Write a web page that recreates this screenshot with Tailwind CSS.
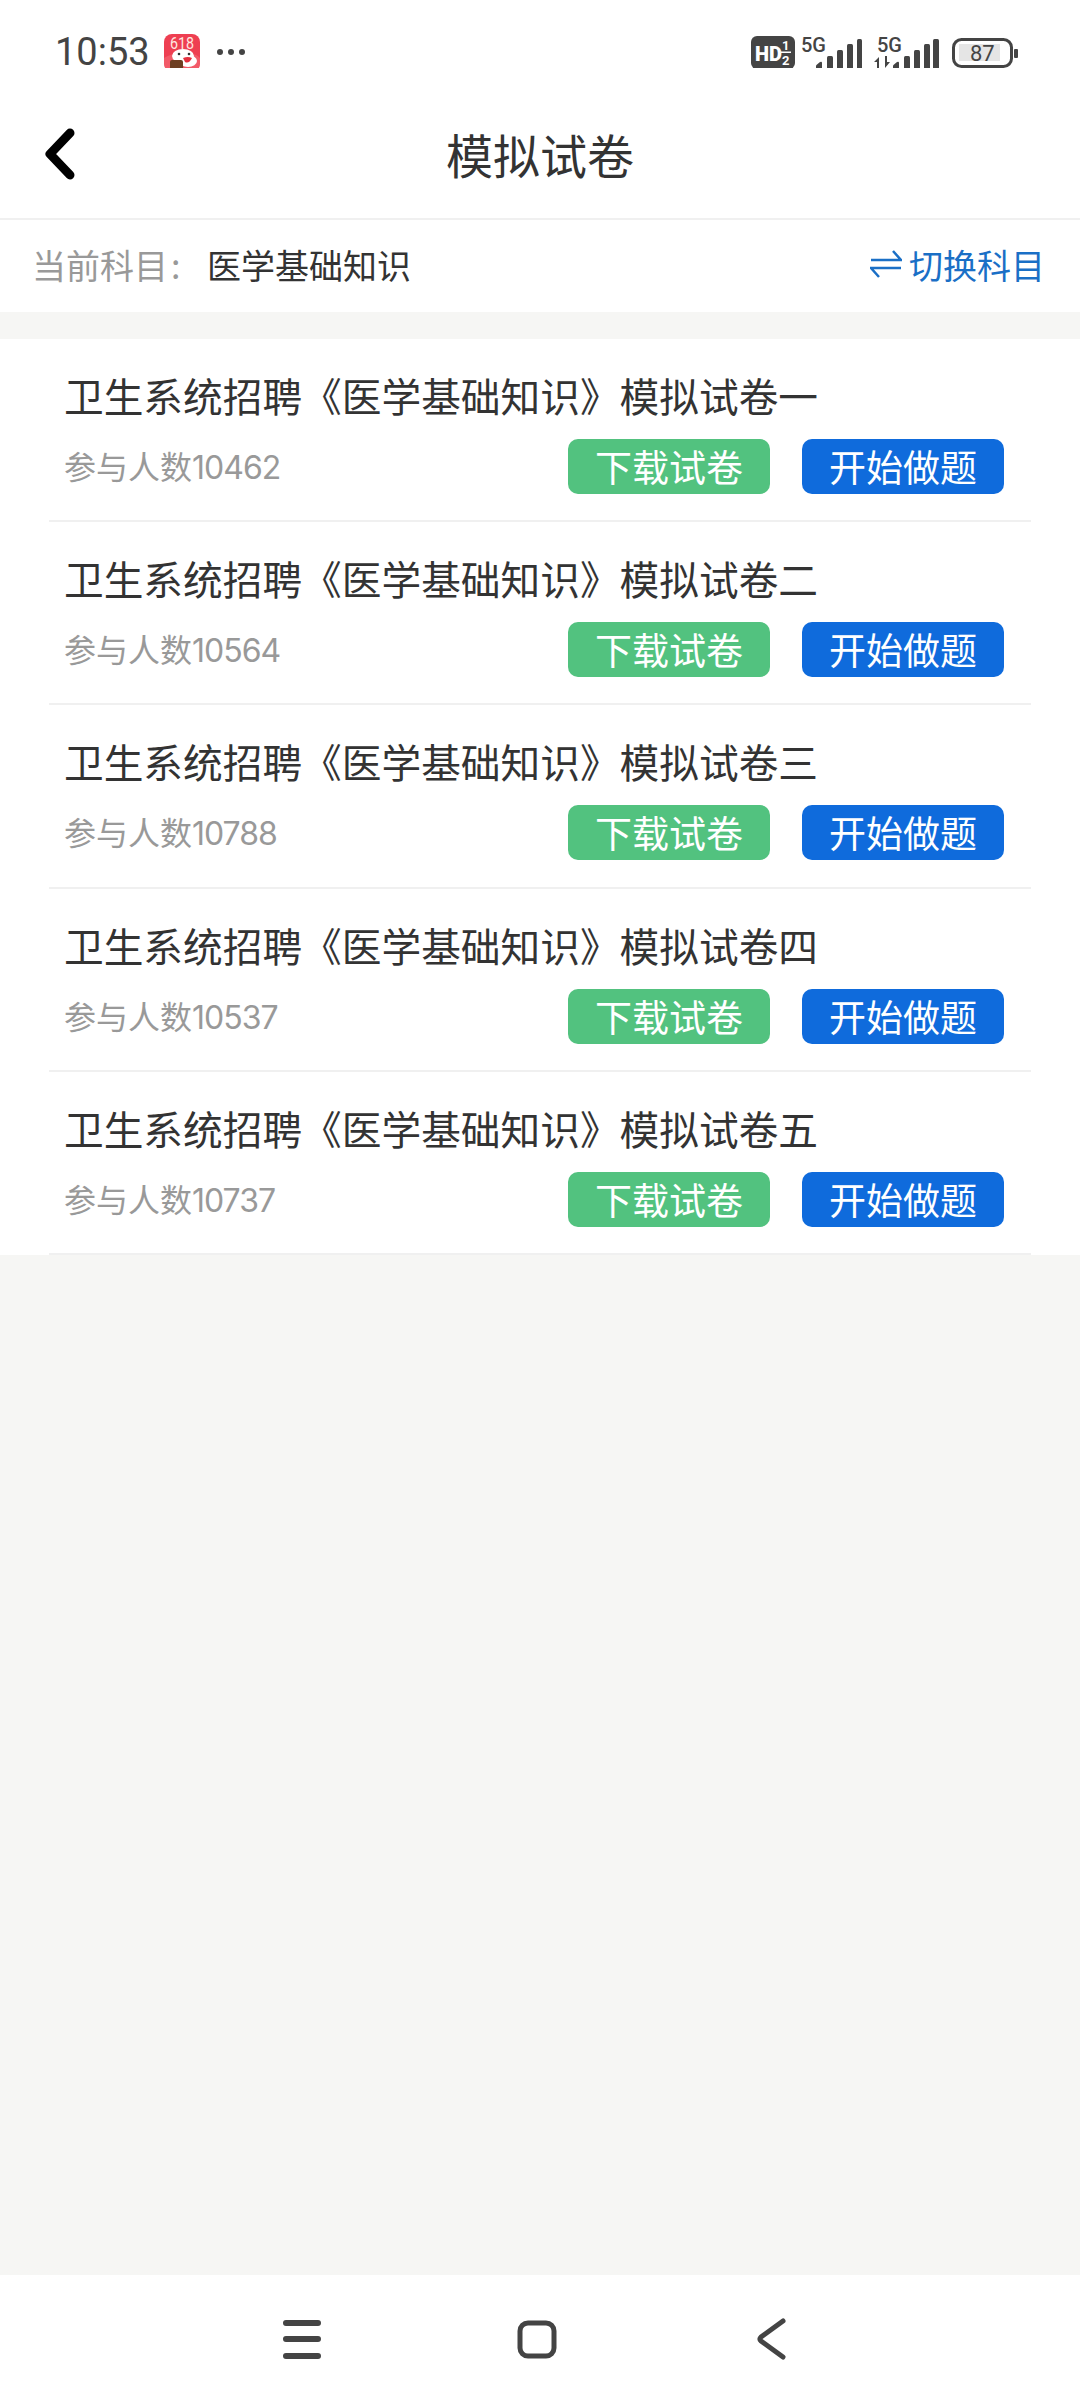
<!DOCTYPE html>
<html lang="zh-CN">
<head>
<meta charset="utf-8">
<script src="https://cdn.jsdelivr.net/npm/@tailwindcss/browser@4"></script>
<title>模拟试卷</title>
</head>
<body class="m-0 bg-[#f6f6f4]">
<div class="flex flex-col w-[1080px] h-[2401px] overflow-hidden bg-[#f6f6f4] font-['Noto_Sans_CJK_SC','Noto_Sans',sans-serif]">

  <!-- status bar -->
  <div class="relative h-[68px] shrink-0 bg-white pt-[34px] pl-[55px] pr-[62px] flex items-start justify-between text-[#444]">
    <div class="flex items-center h-[36px]">
      <span class="font-['Roboto',sans-serif] text-[38px] leading-[36px] w-[91px] text-[#444]">10:53</span>
      <svg class="ml-[18px]" width="36" height="37" viewBox="0 0 36 37">
        <rect width="36" height="37" rx="8" fill="#ee3f52"/>
        <path d="M0 24 C8 20 12 18 18 19 C26 20 32 19 36 24 L36 29 Q36 37 28 37 L8 37 Q0 37 0 29 Z" fill="#f25a68"/>
        <text x="18" y="15" text-anchor="middle" font-family="Roboto" font-size="17" fill="#ffe8e0" font-weight="400" textLength="24" lengthAdjust="spacingAndGlyphs">618</text>
        <ellipse cx="19" cy="22" rx="11" ry="7" fill="#fff"/>
        <ellipse cx="24" cy="27" rx="9" ry="6" fill="#fff"/>
        <path d="M19 24 Q24 22 28 24 Q25 30 21 28 Z" fill="#e5303f"/>
        <circle cx="15" cy="20" r="1.300" fill="#333"/><circle cx="25" cy="20" r="1.300" fill="#333"/>
        <rect x="6" y="26" width="13" height="11" rx="2" fill="#6d3f22"/>
      </svg>
      <div class="ml-[17px] flex gap-[5px] items-center">
        <span class="w-[6px] h-[6px] rounded-full bg-[#444]"></span>
        <span class="w-[6px] h-[6px] rounded-full bg-[#444]"></span>
        <span class="w-[6px] h-[6px] rounded-full bg-[#444]"></span>
      </div>
    </div>
    <svg class="absolute left-[751px] top-[26px]" width="270" height="44" viewBox="0 -10 270 44">
      <rect x="0" y="0" width="44" height="33" rx="6" fill="#444"/>
      <text x="4" y="25" font-family="Roboto" font-weight="900" font-size="20" fill="#fff">HD</text>
      <text x="31" y="14" font-family="Roboto" font-weight="700" font-size="13" fill="#fff">1</text>
      <rect x="30" y="15.500" width="10" height="1.500" fill="#fff"/>
      <text x="31" y="29" font-family="Roboto" font-weight="700" font-size="13" fill="#fff">2</text>
      <text x="50" y="16" font-family="Roboto" font-weight="500" font-size="20" fill="#444" textLength="25" lengthAdjust="spacingAndGlyphs">5G</text>
      <g fill="#444">
        <path d="M65 33 v-3 q0-1 1-1.500 l3-2.500 q2-1 2 1 v6.500 z"/>
        <rect x="76" y="20" width="6" height="13" rx="1.500"/>
        <rect x="86" y="14" width="6" height="19" rx="1.500"/>
        <rect x="96" y="8" width="6" height="25" rx="1.500"/>
        <rect x="106" y="3" width="5" height="30" rx="1.500"/>
      </g>
      <text x="126" y="16" font-family="Roboto" font-weight="500" font-size="20" fill="#444" textLength="25" lengthAdjust="spacingAndGlyphs">5G</text>
      <g fill="#444">
        <path d="M123 26 l5-5 v12 h-2 v-7 z"/>
        <path d="M139 26 l-5 6 v-12 h2 v6 z"/>
        <path d="M142 33 v-3 q0-1 1-1.500 l3-2.500 q2-1 2 1 v6.500 z"/>
        <rect x="153" y="20" width="6" height="13" rx="1.500"/>
        <rect x="163" y="14" width="6" height="19" rx="1.500"/>
        <rect x="173" y="8" width="6" height="25" rx="1.500"/>
        <rect x="182" y="3" width="6" height="30" rx="1.500"/>
      </g>
      <rect x="202.500" y="3.500" width="58" height="27" rx="8" fill="none" stroke="#444" stroke-width="3"/>
      <rect x="208" y="8" width="41" height="17" fill="#e5e5e5"/>
      <text x="219" y="25" font-family="Roboto" font-size="22" fill="#444">87</text>
      <rect x="263" y="13" width="4" height="9" rx="1" fill="#444"/>
    </svg>
  </div>

  <!-- header -->
  <div class="relative h-[152px] shrink-0 bg-white border-b-2 border-[#f0f0f0] flex items-center justify-center pt-[22px]">
    <svg class="absolute left-[44px] top-[59px]" width="32" height="54" viewBox="0 0 32 54">
      <path d="M26 6 L6 27 L26 48" fill="none" stroke="#000" stroke-width="9" stroke-linecap="round" stroke-linejoin="round"/>
    </svg>
    <h1 class="m-0 text-[47px] leading-[60px] font-normal text-[#333]">模拟试卷</h1>
  </div>

  <!-- subject row -->
  <div class="h-[92px] shrink-0 bg-white flex items-center justify-between pl-[32px] pr-[35px] text-[34px] pb-[4px]">
    <div class="flex items-center">
      <span class="text-[#999] w-[175px] flex">当前科目<span class="ml-[3px]">:</span></span>
      <span class="text-[#333]">医学基础知识</span>
    </div>
    <div class="flex items-center text-[#1a6fc6] gap-[7px]">
      <svg width="32" height="32" viewBox="0 0 32 32">
        <path d="M1 12 H31 L23 3 M31 20 H1 L9 29" fill="none" stroke="#1a6fc6" stroke-width="2.500"/>
      </svg>
      <span>切换科目</span>
    </div>
  </div>

  <!-- list -->
  <div class="mt-[27px] shrink-0 bg-white flex flex-col">
    <div class="h-[183.200px] mx-[49px] px-[15px] border-b-2 border-[#f0f0f0] flex flex-col">
      <div class="mt-[28px] text-[39.700px] leading-[56px] text-[#333] whitespace-nowrap">卫生系统招聘《医学基础知识》模拟试卷一</div>
      <div class="mt-[16px] flex items-center justify-between pr-[12px]">
        <span class="text-[32px] text-[#999] font-['Noto_Sans_CJK_SC',sans-serif]">参与人数<span class="font-['Inter',sans-serif] tracking-[-1px]">10462</span></span>
        <div class="flex gap-[32px]">
          <span class="w-[202px] h-[55px] rounded-[10px] bg-[#52c27f] text-white text-[37px] leading-[54px] text-center">下载试卷</span>
          <span class="w-[202px] h-[55px] rounded-[10px] bg-[#0f6bdc] text-white text-[37px] leading-[54px] text-center">开始做题</span>
        </div>
      </div>
    </div>
    <div class="h-[183.200px] mx-[49px] px-[15px] border-b-2 border-[#f0f0f0] flex flex-col">
      <div class="mt-[28px] text-[39.700px] leading-[56px] text-[#333] whitespace-nowrap">卫生系统招聘《医学基础知识》模拟试卷二</div>
      <div class="mt-[16px] flex items-center justify-between pr-[12px]">
        <span class="text-[32px] text-[#999] font-['Noto_Sans_CJK_SC',sans-serif]">参与人数<span class="font-['Inter',sans-serif] tracking-[-1px]">10564</span></span>
        <div class="flex gap-[32px]">
          <span class="w-[202px] h-[55px] rounded-[10px] bg-[#52c27f] text-white text-[37px] leading-[54px] text-center">下载试卷</span>
          <span class="w-[202px] h-[55px] rounded-[10px] bg-[#0f6bdc] text-white text-[37px] leading-[54px] text-center">开始做题</span>
        </div>
      </div>
    </div>
    <div class="h-[183.200px] mx-[49px] px-[15px] border-b-2 border-[#f0f0f0] flex flex-col">
      <div class="mt-[28px] text-[39.700px] leading-[56px] text-[#333] whitespace-nowrap">卫生系统招聘《医学基础知识》模拟试卷三</div>
      <div class="mt-[16px] flex items-center justify-between pr-[12px]">
        <span class="text-[32px] text-[#999] font-['Noto_Sans_CJK_SC',sans-serif]">参与人数<span class="font-['Inter',sans-serif] tracking-[-1px]">10788</span></span>
        <div class="flex gap-[32px]">
          <span class="w-[202px] h-[55px] rounded-[10px] bg-[#52c27f] text-white text-[37px] leading-[54px] text-center">下载试卷</span>
          <span class="w-[202px] h-[55px] rounded-[10px] bg-[#0f6bdc] text-white text-[37px] leading-[54px] text-center">开始做题</span>
        </div>
      </div>
    </div>
    <div class="h-[183.200px] mx-[49px] px-[15px] border-b-2 border-[#f0f0f0] flex flex-col">
      <div class="mt-[28px] text-[39.700px] leading-[56px] text-[#333] whitespace-nowrap">卫生系统招聘《医学基础知识》模拟试卷四</div>
      <div class="mt-[16px] flex items-center justify-between pr-[12px]">
        <span class="text-[32px] text-[#999] font-['Noto_Sans_CJK_SC',sans-serif]">参与人数<span class="font-['Inter',sans-serif] tracking-[-1px]">10537</span></span>
        <div class="flex gap-[32px]">
          <span class="w-[202px] h-[55px] rounded-[10px] bg-[#52c27f] text-white text-[37px] leading-[54px] text-center">下载试卷</span>
          <span class="w-[202px] h-[55px] rounded-[10px] bg-[#0f6bdc] text-white text-[37px] leading-[54px] text-center">开始做题</span>
        </div>
      </div>
    </div>
    <div class="h-[183.200px] mx-[49px] px-[15px] border-b-2 border-[#f0f0f0] flex flex-col">
      <div class="mt-[28px] text-[39.700px] leading-[56px] text-[#333] whitespace-nowrap">卫生系统招聘《医学基础知识》模拟试卷五</div>
      <div class="mt-[16px] flex items-center justify-between pr-[12px]">
        <span class="text-[32px] text-[#999] font-['Noto_Sans_CJK_SC',sans-serif]">参与人数<span class="font-['Inter',sans-serif] tracking-[-1px]">10737</span></span>
        <div class="flex gap-[32px]">
          <span class="w-[202px] h-[55px] rounded-[10px] bg-[#52c27f] text-white text-[37px] leading-[54px] text-center">下载试卷</span>
          <span class="w-[202px] h-[55px] rounded-[10px] bg-[#0f6bdc] text-white text-[37px] leading-[54px] text-center">开始做题</span>
        </div>
      </div>
    </div>
  </div>

  <div class="flex-1"></div>

  <!-- nav bar -->
  <div class="relative h-[126px] shrink-0 bg-white">
    <svg class="absolute left-[280px] top-[42px]" width="510" height="50" viewBox="0 0 510 50">
      <g fill="none" stroke="#444" stroke-linecap="round" stroke-linejoin="round">
        <path d="M6 6 H38 M6 22 H38 M6 39 H38" stroke-width="6"/>
        <rect x="240" y="6" width="34" height="33" rx="8" stroke-width="5"/>
        <path d="M503 4 L481 20 Q479 22 481 24 L503 40" stroke-width="5"/>
      </g>
    </svg>
  </div>
</div>
</body>
</html>
